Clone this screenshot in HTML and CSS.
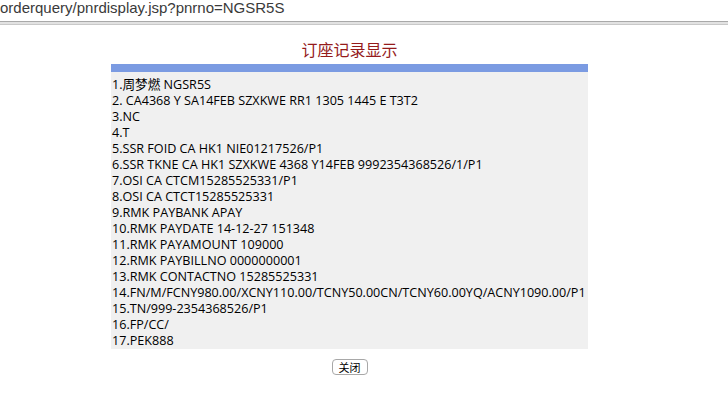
FILE: index.html
```html
<!DOCTYPE html>
<html lang="zh">
<head>
<meta charset="utf-8">
<title>订座记录显示</title>
<link rel="stylesheet" href="styles.css">
</head>
<body>
<div class="urlbar">orderquery/pnrdisplay.jsp?pnrno=NGSR5S</div>
<div class="page">
  <h1 class="title">订座记录显示</h1>
  <div class="bar"></div>
  <div class="record">
    <div>1.周梦燃 NGSR5S</div>
    <div>2. CA4368 Y SA14FEB SZXKWE RR1 1305 1445 E T3T2</div>
    <div>3.NC</div>
    <div>4.T</div>
    <div>5.SSR FOID CA HK1 NIE01217526/P1</div>
    <div>6.SSR TKNE CA HK1 SZXKWE 4368 Y14FEB 9992354368526/1/P1</div>
    <div>7.OSI CA CTCM15285525331/P1</div>
    <div>8.OSI CA CTCT15285525331</div>
    <div>9.RMK PAYBANK APAY</div>
    <div>10.RMK PAYDATE 14-12-27 151348</div>
    <div>11.RMK PAYAMOUNT 109000</div>
    <div>12.RMK PAYBILLNO 0000000001</div>
    <div>13.RMK CONTACTNO 15285525331</div>
    <div>14.FN/M/FCNY980.00/XCNY110.00/TCNY50.00CN/TCNY60.00YQ/ACNY1090.00/P1</div>
    <div>15.TN/999-2354368526/P1</div>
    <div>16.FP/CC/</div>
    <div>17.PEK888</div>
  </div>
  <div class="actions"><button class="btn" type="button">关闭</button></div>
</div>
</body>
</html>
```
FILE: styles.css
```css
html, body {
  margin: 0;
  padding: 0;
  background: #ffffff;
}
.urlbar {
  height: 21px;
  line-height: 16px;
  font-family: "Liberation Sans", Arial, sans-serif;
  font-size: 15px;
  color: #3a3a3a;
  white-space: nowrap;
  overflow: hidden;
  border-bottom: 1px solid #a9a9a9;
  box-shadow: 0 2px 0 #e2e2e2, 0 3px 0 #c9c9c9;
}
.page {
  width: 477px;
  margin-left: 111px;
  margin-top: 17px;
}
.title {
  margin: 0;
  height: 25px;
  line-height: 20px;
  text-align: center;
  font-family: "Noto Sans CJK SC", sans-serif;
  font-weight: normal;
  font-size: 16px;
  color: #951b1b;
}
.bar {
  height: 8px;
  background: #7b9be2;
}
.record {
  background: #f0f0f0;
  padding: 5px 0 0 1px;
  font-family: "Open Sans", "Noto Sans CJK SC", sans-serif;
  font-size: 12.6px;
  line-height: 16px;
  color: #000;
  white-space: nowrap;
}
.actions {
  text-align: center;
  padding-top: 9px;
}
.btn {
  font-family: "Noto Sans CJK SC", sans-serif;
  font-size: 11px;
  line-height: 12px;
  height: 16px;
  padding: 1px 6px;
  background: #ffffff;
  color: #000;
  border: 1px solid #a8a8a8;
  border-radius: 4px;
}
```
